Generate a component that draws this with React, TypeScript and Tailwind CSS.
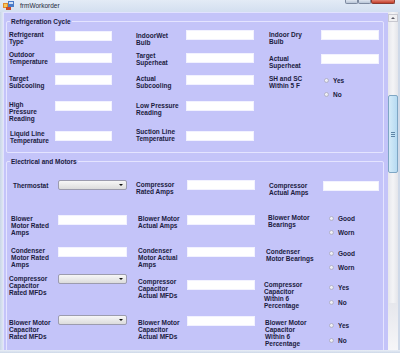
import React from 'react';

const FONT = { fontFamily: '"Liberation Sans", Arial, sans-serif' };

const Label: React.FC<{ className?: string; children: React.ReactNode }> = ({ className = '', children }) => (
  <div className={`shrink-0 text-[6.5px] leading-[7px] font-bold text-[#1b1b3e] ${className}`}>{children}</div>
);

const TextBox: React.FC<{ className?: string }> = ({ className = '' }) => (
  <input readOnly className={`block shrink-0 h-[10px] bg-white border border-[#f2f2ff] outline-none ${className}`} />
);

const Combo: React.FC<{ className?: string }> = ({ className = '' }) => (
  <div
    className={`relative shrink-0 h-[10px] w-[69px] rounded-[2px] border border-[#9c9cae] bg-gradient-to-b from-[#f7f7f7] to-[#dcdcdc] ${className}`}
  >
    <span className="absolute right-[3px] top-[3px] w-0 h-0 border-l-[2px] border-r-[2px] border-t-[2px] border-l-transparent border-r-transparent border-t-[#111]" />
  </div>
);

const Radio: React.FC<{ text: string; className?: string }> = ({ text, className = '' }) => (
  <div className={`flex items-center ${className}`}>
    <span className="block w-[5px] h-[5px] rounded-full border border-[#b4b4c8] bg-gradient-to-br from-white to-[#dcdce6]" />
    <span className="ml-[4px] text-[6.5px] leading-[7px] font-bold text-[#1b1b3e]">{text}</span>
  </div>
);

const GroupBox: React.FC<{ title: string; className?: string; children: React.ReactNode }> = ({ title, className = '', children }) => (
  <fieldset className={`ml-[2px] w-[378px] border border-[#e4e4ff] rounded-[2px] ${className}`}>
    <legend className="ml-[3px] px-[1px] text-[6.5px] leading-[7px] font-bold text-[#1b1b3e]">{title}</legend>
    {children}
  </fieldset>
);

const TitleBar = () => (
  <div className="flex h-[12px] shrink-0 items-start bg-gradient-to-b from-[#e3ebf6] to-[#d3dff0]">
    <svg width="11" height="9" viewBox="0 0 11 9" className="ml-[3px] mt-[1px]">
      <rect x="0" y="2" width="5" height="5" fill="#e08a2c" />
      <rect x="1" y="3" width="3" height="3" fill="#f6c85a" />
      <rect x="5" y="0" width="6" height="6" fill="#4a7cc8" />
      <rect x="6" y="1" width="4" height="2" fill="#cfe0f6" />
      <rect x="3" y="6" width="5" height="3" fill="#c84a2c" />
    </svg>
    <span className="ml-[6px] mt-[2px] text-[6.5px] leading-[7px] text-[#1e2a3a]">frmWorkorder</span>
    <div className="ml-auto mr-[5px] flex">
      <div className="h-[4px] w-[13px] rounded-b-[2px] border border-t-0 border-[#7d8aa0] bg-gradient-to-b from-[#dfe6f0] to-[#b9c6d8]" />
      <div className="h-[4px] w-[13px] rounded-b-[2px] border border-t-0 border-[#7d8aa0] bg-gradient-to-b from-[#dfe6f0] to-[#b9c6d8]" />
      <div className="h-[4px] w-[24px] rounded-b-[2px] border border-t-0 border-[#8a3a30] bg-gradient-to-b from-[#e08070] to-[#c23a28]" />
    </div>
  </div>
);

const ScrollBar = () => (
  <div className="w-[10px] shrink-0 flex flex-col bg-gradient-to-r from-[#e6e7ec] via-[#f4f4f6] to-[#e4e5ea]">
    <div className="mt-[2px] h-[8px] w-[10px] flex items-center justify-center border border-[#c8c8d0] bg-[#f0f0f2]">
      <span className="w-0 h-0 border-l-[2px] border-r-[2px] border-b-[2px] border-l-transparent border-r-transparent border-b-[#5a5a66]" />
    </div>
    <div className="mt-[73px] h-[78px] w-[10px] rounded-[2px] border border-[#7ea6c4] bg-gradient-to-r from-[#d4ebf8] to-[#b6daf2] flex items-center justify-center">
      <div className="flex flex-col gap-[1px]">
        <span className="block h-px w-[4px] bg-[#5f86a6]" />
        <span className="block h-px w-[4px] bg-[#5f86a6]" />
        <span className="block h-px w-[4px] bg-[#5f86a6]" />
      </div>
    </div>
    <div className="flex-1 mt-[130px] bg-gradient-to-b from-[#e6e7ec] to-[#f6f6f8]" />
  </div>
);

const Refrigeration = () => (
  <GroupBox title="Refrigeration Cycle" className="mt-[5px] h-[135px]">
    <div className="pt-[5px]">
      {/* row 1 */}
      <div className="flex h-[21px]">
        <Label className="ml-[2px] w-[46px] mt-[1px]">Refrigerant<br />Type</Label>
        <TextBox className="w-[57px] mt-[1px]" />
        <Label className="ml-[24px] w-[50px] mt-[2px]">IndoorWet<br />Bulb</Label>
        <TextBox className="w-[68px]" />
        <Label className="ml-[15px] w-[52px] mt-[1px]">Indoor Dry<br />Bulb</Label>
        <TextBox className="w-[58px]" />
      </div>
      {/* row 2 */}
      <div className="flex h-[24px]">
        <Label className="ml-[2px] w-[46px]">Outdoor<br />Temperature</Label>
        <TextBox className="w-[57px] mt-[2px]" />
        <Label className="ml-[24px] w-[50px] mt-[1px]">Target<br />Superheat</Label>
        <TextBox className="w-[68px] mt-[2px]" />
        <Label className="ml-[15px] w-[52px] mt-[4px]">Actual<br />Superheat</Label>
        <TextBox className="w-[58px] mt-[3px]" />
      </div>
      {/* row 3 */}
      <div className="flex h-[26px]">
        <Label className="ml-[2px] w-[46px]">Target<br />Subcooling</Label>
        <TextBox className="w-[57px]" />
        <Label className="ml-[24px] w-[50px]">Actual<br />Subcooling</Label>
        <TextBox className="w-[68px]" />
        <Label className="ml-[15px] w-[52px]">SH and SC<br />Within 5 F</Label>
        <div className="ml-[3px] mt-[2px] flex flex-col gap-[7px]">
          <Radio text="Yes" />
          <Radio text="No" />
        </div>
      </div>
      {/* row 4 */}
      <div className="flex h-[27px]">
        <Label className="ml-[2px] w-[46px]">High<br />Pressure<br />Reading</Label>
        <TextBox className="w-[57px]" />
        <Label className="ml-[24px] w-[50px] mt-[1px]">Low Pressure<br />Reading</Label>
        <TextBox className="w-[68px]" />
      </div>
      {/* row 5 */}
      <div className="flex h-[23px]">
        <Label className="ml-[3px] w-[45px] mt-[2px]">Liquid Line<br />Temperature</Label>
        <TextBox className="w-[57px] mt-[3px]" />
        <Label className="ml-[24px] w-[50px]">Suction Line<br />Temperature</Label>
        <TextBox className="w-[68px] mt-[3px]" />
      </div>
    </div>
  </GroupBox>
);

const Electrical = () => (
  <GroupBox title="Electrical and Motors" className="mt-[5px] h-[200px]">
    <div className="pt-[13px]">
      {/* row 1 */}
      <div className="flex h-[36px]">
        <Label className="ml-[6px] w-[45px] mt-[4px]">Thermostat</Label>
        <Combo className="mt-[2px]" />
        <Label className="ml-[9px] w-[51px] mt-[3px]">Compressor<br />Rated Amps</Label>
        <TextBox className="w-[68px] mt-[2px]" />
        <Label className="ml-[14px] w-[54px] mt-[4px]">Compressor<br />Actual Amps</Label>
        <TextBox className="w-[56px] mt-[3px]" />
      </div>
      {/* row 2 */}
      <div className="flex h-[32px]">
        <Label className="ml-[4px] w-[47px] mt-[1px]">Blower<br />Motor Rated<br />Amps</Label>
        <TextBox className="w-[69px] mt-[1px]" />
        <Label className="ml-[11px] w-[49px] mt-[1px]">Blower Motor<br />Actual Amps</Label>
        <TextBox className="w-[68px] mt-[1px]" />
        <Label className="ml-[13px] w-[55px]">Blower Motor<br />Bearings</Label>
        <div className="ml-[6px] mt-[1px] flex flex-col gap-[7px]">
          <Radio text="Good" />
          <Radio text="Worn" />
        </div>
      </div>
      {/* row 3 */}
      <div className="flex h-[28px]">
        <Label className="ml-[4px] w-[47px] mt-[1px]">Condenser<br />Motor Rated<br />Amps</Label>
        <TextBox className="w-[69px] mt-[1px]" />
        <Label className="ml-[11px] w-[49px] mt-[1px]">Condenser<br />Motor Actual<br />Amps</Label>
        <TextBox className="w-[68px] mt-[1px]" />
        <Label className="ml-[11px] w-[57px] mt-[2px]">Condenser<br />Motor Bearings</Label>
        <div className="ml-[6px] mt-[4px] flex flex-col gap-[7px]">
          <Radio text="Good" />
          <Radio text="Worn" />
        </div>
      </div>
      {/* row 4 */}
      <div className="flex h-[41px]">
        <Label className="ml-[2px] w-[49px] mt-[1px]">Compressor<br />Capacitor<br />Rated MFDs</Label>
        <Combo />
        <Label className="ml-[11px] w-[49px] mt-[4px]">Compressor<br />Capacitor<br />Actual MFDs</Label>
        <TextBox className="w-[68px] mt-[6px]" />
        <Label className="ml-[9px] w-[59px] mt-[7px]">Compressor<br />Capacitor<br />Within 6<br />Percentage</Label>
        <div className="ml-[6px] mt-[10px] flex flex-col gap-[8px]">
          <Radio text="Yes" />
          <Radio text="No" />
        </div>
      </div>
      {/* row 5 */}
      <div className="flex h-[36px]">
        <Label className="ml-[2px] w-[49px] mt-[4px]">Blower Motor<br />Capacitor<br />Rated MFDs</Label>
        <Combo />
        <Label className="ml-[11px] w-[49px] mt-[4px]">Blower Motor<br />Capacitor<br />Actual MFDs</Label>
        <TextBox className="w-[68px] mt-[1px]" />
        <Label className="ml-[10px] w-[58px] mt-[4px]">Blower Motor<br />Capacitor<br />Within 6<br />Percentage</Label>
        <div className="ml-[6px] mt-[7px] flex flex-col gap-[8px]">
          <Radio text="Yes" />
          <Radio text="No" />
        </div>
      </div>
    </div>
  </GroupBox>
);

export default function App() {
  return (
    <div className="w-[400px] h-[353px] overflow-hidden flex flex-col bg-[#d6e0ee]" style={FONT}>
      <TitleBar />
      <div className="flex flex-1 min-h-0">
        <div className="w-[3px] shrink-0 bg-gradient-to-r from-[#c9d6e8] to-[#dfe7f2]" />
        <div className="flex-1 min-w-0 overflow-hidden bg-[#c4c4f9] border-t border-l border-[#e2e2ff]">
          <Refrigeration />
          <Electrical />
        </div>
        <ScrollBar />
        <div className="w-[2px] shrink-0 bg-[#cfd9e8]" />
      </div>
      <div className="h-[3px] shrink-0 bg-gradient-to-b from-[#e9eef6] to-[#cdd8e8]" />
    </div>
  );
}
